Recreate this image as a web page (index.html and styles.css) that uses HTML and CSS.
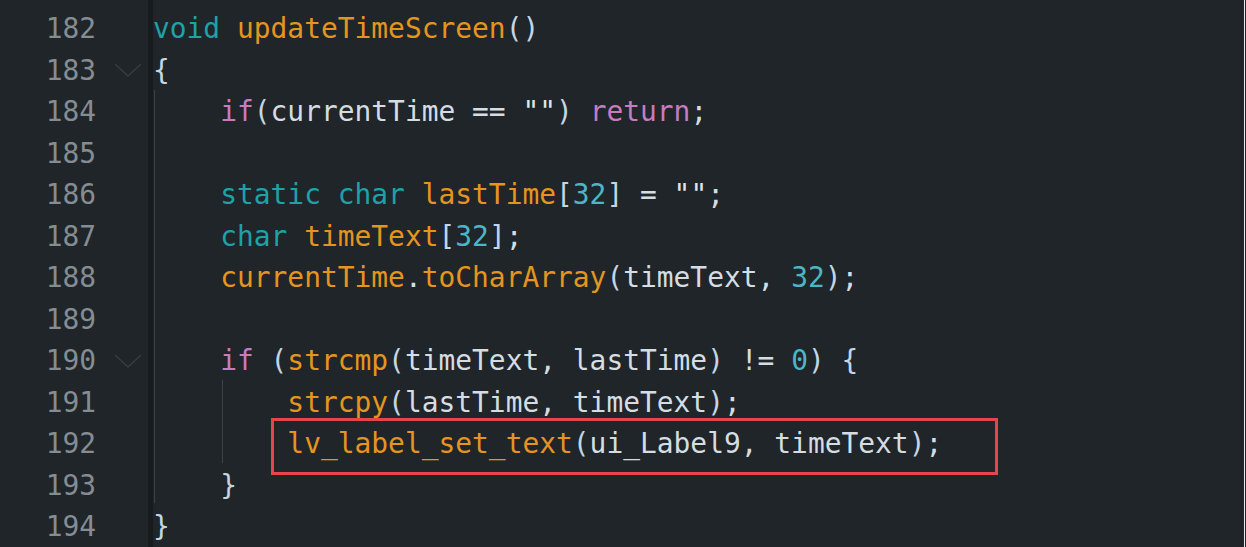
FILE: index.html
```html
<!DOCTYPE html>
<html>
<head>
<meta charset="utf-8">
<link rel="stylesheet" href="styles.css">
</head>
<body>
<div class="editor">
  <div class="row"><span class="ln">182</span><span class="fold"></span><span class="sep"></span><span class="code"><span class="kw">void</span> <span class="fn">updateTimeScreen</span><span class="br">()</span></span></div>
  <div class="row"><span class="ln">183</span><span class="fold"><svg class="chev" width="28" height="14" viewBox="0 0 28 14"><path d="M1 1 L14 13 L27 1" fill="none" stroke="#363d43" stroke-width="1.4"/></svg></span><span class="sep"></span><span class="code"><span class="br">{</span></span></div>
  <div class="row"><span class="ln">184</span><span class="fold"></span><span class="sep"></span><span class="code">    <span class="ctl">if</span><span class="br">(</span>currentTime == <span class="str">""</span><span class="br">)</span> <span class="ctl">return</span>;</span></div>
  <div class="row"><span class="ln">185</span><span class="fold"></span><span class="sep"></span><span class="code"> </span></div>
  <div class="row"><span class="ln">186</span><span class="fold"></span><span class="sep"></span><span class="code">    <span class="kw">static</span> <span class="kw">char</span> <span class="fn">lastTime</span><span class="br">[</span><span class="num">32</span><span class="br">]</span> = <span class="str">""</span>;</span></div>
  <div class="row"><span class="ln">187</span><span class="fold"></span><span class="sep"></span><span class="code">    <span class="kw">char</span> <span class="fn">timeText</span><span class="br">[</span><span class="num">32</span><span class="br">]</span>;</span></div>
  <div class="row"><span class="ln">188</span><span class="fold"></span><span class="sep"></span><span class="code">    <span class="fn">currentTime</span>.<span class="fn">toCharArray</span><span class="br">(</span>timeText, <span class="num">32</span><span class="br">)</span>;</span></div>
  <div class="row"><span class="ln">189</span><span class="fold"></span><span class="sep"></span><span class="code"> </span></div>
  <div class="row"><span class="ln">190</span><span class="fold"><svg class="chev" width="28" height="14" viewBox="0 0 28 14"><path d="M1 1 L14 13 L27 1" fill="none" stroke="#363d43" stroke-width="1.4"/></svg></span><span class="sep"></span><span class="code">    <span class="ctl">if</span> <span class="br">(</span><span class="fn">strcmp</span><span class="br">(</span>timeText, lastTime<span class="br">)</span> != <span class="num">0</span><span class="br">)</span> <span class="br">{</span></span></div>
  <div class="row"><span class="ln">191</span><span class="fold"></span><span class="sep"></span><span class="code">        <span class="fn">strcpy</span><span class="br">(</span>lastTime, timeText<span class="br">)</span>;</span></div>
  <div class="row"><span class="ln">192</span><span class="fold"></span><span class="sep"></span><span class="code">        <span class="mark"><span class="fn">lv_label_set_text</span><span class="br">(</span>ui_Label9, timeText<span class="br">)</span>;</span></span></div>
  <div class="row"><span class="ln">193</span><span class="fold"></span><span class="sep"></span><span class="code">    <span class="br">}</span></span></div>
  <div class="row"><span class="ln">194</span><span class="fold"></span><span class="sep"></span><span class="code"><span class="br">}</span></span></div>
  <div class="guide g1"></div>
  <div class="guide g2"></div>
</div>
</body>
</html>
```

FILE: styles.css
```css
html, body {
  margin: 0;
  padding: 0;
  background: #1f2529;
}

body {
  width: 1246px;
  height: 547px;
  overflow: hidden;
}

.editor {
  position: relative;
  width: 1245px;
  height: 547px;
  box-sizing: border-box;
  border-right: 1px solid #e8eaec;
  padding-top: 8px;
  background: #1f2529;
  font-family: "DejaVu Sans Mono", "Liberation Mono", monospace;
  font-size: 27.9px;
  color: #d5dde2;
}

.editor::before {
  content: "";
  position: absolute;
  left: 148px;
  top: 0;
  bottom: 0;
  width: 5px;
  background: #171b1e;
}

.row {
  display: grid;
  grid-template-columns: 96px 52px 5px 1fr;
  height: 41.5px;
  line-height: 41.5px;
  align-items: center;
}

.ln {
  text-align: right;
  color: #858d92;
}

.fold {
  display: flex;
  align-items: center;
  justify-content: flex-end;
  padding-right: 6px;
  height: 100%;
}

.chev {
  display: block;
}

.code {
  white-space: pre;
  position: relative;
}

.kw { color: #1ea1a8; }
.ctl { color: #c77cc2; }
.fn { color: #e5951f; }
.num { color: #4db6c6; }
.br { color: #c3d6e4; }
.str { color: #dfe6ea; }

.mark {
  position: relative;
}

.mark::after {
  content: "";
  position: absolute;
  left: -16px;
  top: -9px;
  width: 727px;
  height: 57px;
  box-sizing: border-box;
  border: 3px solid #e8444b;
  pointer-events: none;
}

.guide {
  position: absolute;
  width: 1px;
  background: #3a4247;
}

.g1 {
  left: 154px;
  top: 90px;
  height: 413px;
}

.g2 {
  left: 222px;
  top: 380px;
  height: 83px;
}
```
